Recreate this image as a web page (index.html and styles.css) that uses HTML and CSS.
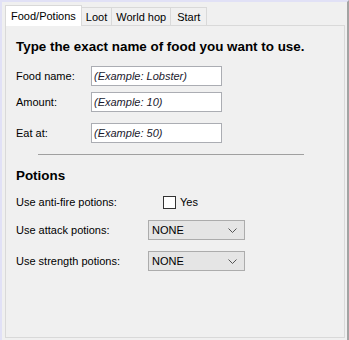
FILE: index.html
```html
<!DOCTYPE html>
<html lang="en">
<head>
    <meta charset="UTF-8">
    <title>Food/Potions</title>
    <link rel="stylesheet" href="styles.css">
</head>
<body>
    <div class="janela">
        <div class="abas">
            <div class="aba ativa">Food/Potions</div>
            <div class="aba">Loot</div>
            <div class="aba">World hop</div>
            <div class="aba inicio">Start</div>
        </div>
        <section class="painel">
            <h1 class="titulo">Type the exact name of food you want to use.</h1>

            <div class="linha l1">
                <span class="rotulo">Food name:</span>
                <div class="campo">(Example: Lobster)</div>
            </div>
            <div class="linha l2">
                <span class="rotulo">Amount:</span>
                <div class="campo">(Example: 10)</div>
            </div>
            <div class="linha l3">
                <span class="rotulo">Eat at:</span>
                <div class="campo">(Example: 50)</div>
            </div>

            <div class="separador"></div>

            <h2 class="titulo pocoes">Potions</h2>

            <div class="linha l4">
                <span class="rotulo largo">Use anti-fire potions:</span>
                <label class="check"><span class="caixa"></span>Yes</label>
            </div>
            <div class="linha l5">
                <span class="rotulo medio">Use attack potions:</span>
                <div class="lista">NONE
                    <svg width="9" height="5" viewBox="0 0 9 5"><path d="M0.5 0.5 L4.5 4.5 L8.5 0.5" fill="none" stroke="#555" stroke-width="1"/></svg>
                </div>
            </div>
            <div class="linha l6">
                <span class="rotulo medio">Use strength potions:</span>
                <div class="lista">NONE
                    <svg width="9" height="5" viewBox="0 0 9 5"><path d="M0.5 0.5 L4.5 4.5 L8.5 0.5" fill="none" stroke="#555" stroke-width="1"/></svg>
                </div>
            </div>
        </section>
    </div>
</body>
</html>
```

FILE: styles.css
```css
body {
    margin: 0px;
    padding: 0px;
    background-color: #f0f0f0;
    font-family: "Liberation Sans", Arial, sans-serif;
    font-size: 11px;
    color: black;
}

.janela {
    border-top: 2px solid #e1e1f6;
    border-left: 2px solid #e1e1f6;
    border-right: 2px solid #a3a3a3;
    display: flex;
    flex-direction: column;
    padding: 3px 0px 0px 3px;
    box-sizing: border-box;
    width: 349px;
    height: 340px;
}

.abas {
    display: flex;
    align-items: flex-end;
    height: 20px;
    position: relative;
    z-index: 1;
}

.aba {
    height: 18px;
    line-height: 18px;
    padding: 0px 4px;
    font-size: 11px;
    border: 1px solid #d9d9d9;
    border-bottom: none;
    border-left: none;
    background-color: #f0f0f0;
    box-sizing: border-box;
}

.aba.inicio {
    padding: 0px 6px;
}

.aba.ativa {
    height: 21px;
    line-height: 20px;
    margin-bottom: -1px;
    padding: 0px 5px;
    background-color: white;
    border-left: 1px solid #d9d9d9;
}

.painel {
    flex: 1;
    margin-right: 2px;
    margin-bottom: 2px;
    border: 1px solid #d9d9d9;
    background-color: #f0f0f0;
    padding: 13px 0px 0px 10px;
}

.titulo {
    margin: 0px;
    font-size: 13.4px;
    font-weight: bold;
    line-height: 16px;
    height: 16px;
}

.linha {
    display: flex;
    align-items: center;
    height: 20px;
}

.l1 { margin-top: 11px; }
.l2 { margin-top: 6px; }
.l3 { margin-top: 11px; }
.l4 { margin-top: 8px; }
.l5 { margin-top: 8px; }
.l6 { margin-top: 11px; }

.rotulo {
    width: 75px;
}

.rotulo.largo {
    width: 147px;
}

.rotulo.medio {
    width: 132px;
}

.campo {
    width: 131px;
    height: 20px;
    box-sizing: border-box;
    border: 1px solid #abadb3;
    background-color: white;
    font-style: italic;
    color: #1a1a2e;
    padding-left: 2px;
    line-height: 18px;
}

.separador {
    height: 1px;
    background-color: #a0a0a0;
    margin: 11px 0px 0px 22px;
    width: 266px;
}

.pocoes {
    margin-top: 13px;
}

.check {
    display: flex;
    align-items: center;
}

.caixa {
    width: 13px;
    height: 13px;
    box-sizing: border-box;
    border: 1px solid #333;
    background-color: white;
    margin-right: 4px;
}

.lista {
    width: 97px;
    height: 20px;
    box-sizing: border-box;
    border: 1px solid #acacac;
    background-color: #e5e5e5;
    display: flex;
    align-items: center;
    justify-content: space-between;
    padding: 0px 7px 0px 3px;
}
```
